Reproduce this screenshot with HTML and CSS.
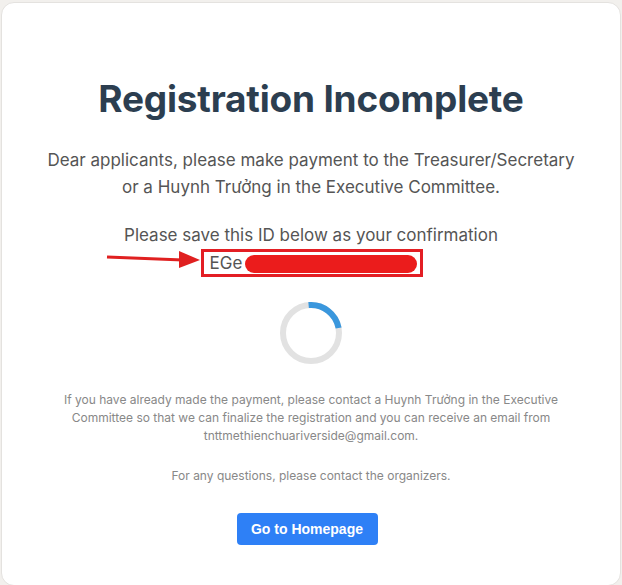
FILE: index.html
```html
<!DOCTYPE html>
<html>
<head>
<meta charset="utf-8">
<link rel="stylesheet" href="styles.css">
</head>
<body>
<div class="card">
  <h1 class="title">Registration Incomplete</h1>
  <p class="lead">Dear applicants, please make payment to the Treasurer/Secretary<br>or a Huynh Trưởng in the Executive Committee.</p>
  <p class="save">Please save this ID below as your confirmation</p>
  <div class="id-row">
    <svg class="arrow" width="96" height="22" viewBox="0 0 96 22">
      <line x1="2" y1="9" x2="78" y2="12" stroke="#e02020" stroke-width="3"/>
      <polygon points="74,3 95,12 74,20" fill="#e02020"/>
    </svg>
    <div class="id-box"><span class="id-text">EGe</span><span class="scribble"></span></div>
  </div>
  <svg class="spinner" width="64" height="64" viewBox="0 0 64 64">
    <circle cx="32" cy="32" r="28" fill="none" stroke="#e2e2e2" stroke-width="6"/>
    <path d="M29.6 4.1 A28 28 0 0 1 59.6 27.1" fill="none" stroke="#3a97dd" stroke-width="6"/>
  </svg>
  <p class="note">If you have already made the payment, please contact a Huynh Trưởng in the Executive Committee so that we can finalize the registration and you can receive an email from tnttmethienchuariverside@gmail.com.</p>
  <p class="note q">For any questions, please contact the organizers.</p>
  <button class="home">Go to Homepage</button>
</div>
</body>
</html>
```

FILE: styles.css
```css
html, body {
  margin: 0;
  padding: 0;
  background: #f2f0ed;
  height: 585px;
  overflow: hidden;
}
body {
  padding: 2px 0 0 1px;
  box-sizing: border-box;
}
.card {
  background: #fff;
  border: 1px solid #e4e2df;
  border-radius: 13px;
  width: 620px;
  height: 584px;
  box-sizing: border-box;
  display: flex;
  flex-direction: column;
  align-items: center;
  font-family: Inter, "Noto Sans", sans-serif;
  text-align: center;
}
.title {
  margin: 73px 0 0;
  font-size: 37px;
  line-height: 46px;
  font-weight: 700;
  color: #2c3e50;
  letter-spacing: -0.2px;
}
.lead {
  margin: 25px 0 0;
  font-size: 17px;
  line-height: 27px;
  color: #555;
}
.save {
  margin: 21px 0 0;
  font-size: 17px;
  line-height: 27px;
  color: #555;
}
.id-row {
  position: relative;
  margin-top: 0;
}
.arrow {
  position: absolute;
  left: -95px;
  top: -1px;
}
.id-box {
  border: 3px solid #e31e24;
  width: 222px;
  height: 28px;
  box-sizing: border-box;
  display: flex;
  align-items: center;
  padding-left: 6px;
  margin-left: 1px;
}
.id-text {
  font-size: 17px;
  color: #555;
}
.scribble {
  display: block;
  width: 172px;
  height: 18px;
  background: #eb1c1c;
  border-radius: 9px;
  margin-left: 3px;
  margin-top: 2px;
}
.spinner {
  margin-top: 24px;
}
.note {
  margin: 26px 0 0;
  width: 520px;
  font-size: 12px;
  line-height: 18px;
  color: #888;
}
.note.q {
  margin-top: 22px;
}
.home {
  margin-top: 28px;
  margin-right: 8px;
  width: 141px;
  height: 32px;
  border: none;
  border-radius: 4px;
  background: #2e80f6;
  color: #fff;
  font-family: "Liberation Sans", Arial, sans-serif;
  font-weight: 700;
  font-size: 14px;
}
```
